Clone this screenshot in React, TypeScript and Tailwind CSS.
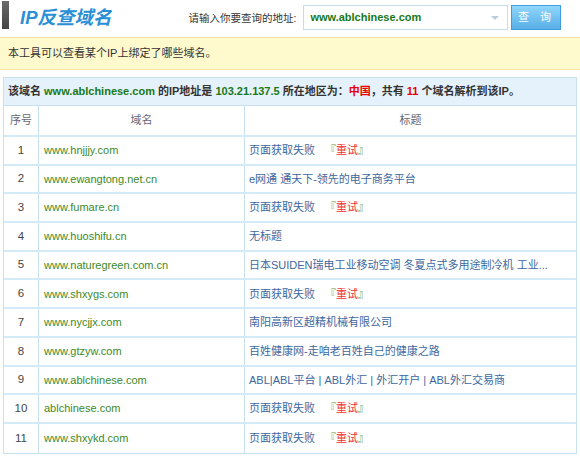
import * as React from "react";

const ROWS: { no: number; domain: string; title: string; retry?: boolean }[] = [
  { no: 1, domain: "www.hnjjjy.com", title: "页面获取失败", retry: true },
  { no: 2, domain: "www.ewangtong.net.cn", title: "e网通 通天下-领先的电子商务平台" },
  { no: 3, domain: "www.fumare.cn", title: "页面获取失败", retry: true },
  { no: 4, domain: "www.huoshifu.cn", title: "无标题" },
  { no: 5, domain: "www.naturegreen.com.cn", title: "日本SUIDEN瑞电工业移动空调 冬夏点式多用途制冷机 工业..." },
  { no: 6, domain: "www.shxygs.com", title: "页面获取失败", retry: true },
  { no: 7, domain: "www.nycjjx.com", title: "南阳高新区超精机械有限公司" },
  { no: 8, domain: "www.gtzyw.com", title: "百姓健康网-走咱老百姓自己的健康之路" },
  { no: 9, domain: "www.ablchinese.com", title: "ABL|ABL平台 | ABL外汇 | 外汇开户 | ABL外汇交易商" },
  { no: 10, domain: "ablchinese.com", title: "页面获取失败", retry: true },
  { no: 11, domain: "www.shxykd.com", title: "页面获取失败", retry: true },
];

const FONT = "font-['Liberation_Sans','Noto_Sans_CJK_SC',sans-serif]";
const COLS = "grid grid-cols-[35px_206px_1fr]";

export default function App() {
  return (
    <div className={`h-[457px] w-[580px] overflow-hidden bg-white text-[#333] ${FONT}`}>
      {/* Header */}
      <div className="flex h-[36px] items-start">
        <div className="ml-[2px] mt-[1px] h-[28px] w-[7px] bg-gradient-to-b from-[#6a6a6a] to-[#444]" />
        <h1 className="ml-[11px] mt-[6px] text-[18.5px] font-bold italic leading-[24px] text-[#2b8fd6]">
          IP反查域名
        </h1>
        <span className="ml-[77px] mt-[11px] text-[10.5px] leading-[14px] text-[#333]">
          请输入你要查询的地址:
        </span>
        <div className="relative ml-[7px] mt-[5px] flex h-[25px] w-[205px] items-center border border-[#c9dbe8] bg-white pl-[6px]">
          <span className="text-[11px] font-bold text-[#187818]">www.ablchinese.com</span>
          <span className="absolute right-[8px] top-[10px] h-0 w-0 border-x-[4px] border-t-[4px] border-x-transparent border-t-[#b9cfe0]" />
        </div>
        <button
          type="button"
          className="ml-[3px] mt-[5px] h-[25px] w-[50px] border border-[#3f9fdc] bg-gradient-to-b from-[#8fd6fb] to-[#56afe6] text-[11px] tracking-[4px] text-white"
        >
          查 询
        </button>
      </div>

      {/* Notice */}
      <div className="mt-[1px] flex h-[33px] items-center border-y border-[#fbe59c] bg-[#fffacd] pl-[8px] text-[11px]">
        本工具可以查看某个IP上绑定了哪些域名。
      </div>

      {/* Result */}
      <div className="mx-[3px] mt-[7px] border border-[#c6e0f0]">
        <div className="flex h-[28px] items-center border-b border-[#c6e0f0] bg-[#e6f2fb] pl-[4px] text-[11px] font-bold">
          该域名&nbsp;<span className="text-[#187818]">www.ablchinese.com</span>&nbsp;的IP地址是&nbsp;
          <span className="text-[#187818]">103.21.137.5</span>&nbsp;所在地区为：
          <span className="text-[#e60000]">中国</span>，共有&nbsp;
          <span className="text-[#e60000]">11</span>&nbsp;个域名解析到该IP。
        </div>

        <div className={`${COLS} h-[31px] border-b-2 border-[#d4eaf6] text-[11px] text-[#667]`}>
          <div className="flex items-center justify-center border-r border-[#c6e0f0]">序号</div>
          <div className="flex items-center justify-center border-r border-[#c6e0f0]">域名</div>
          <div className="flex items-center justify-center">标题</div>
        </div>

        {ROWS.map((r, i) => (
          <div
            key={r.no}
            className={`${COLS} h-[28.7px] ${i < ROWS.length - 1 ? "border-b-2 border-[#d4eaf6]" : ""}`}
          >
            <div className="flex items-center justify-center border-r border-[#c6e0f0] text-[11.5px] text-[#444]">
              {r.no}
            </div>
            <div className="flex items-center border-r border-[#c6e0f0] pl-[5px] text-[11px] text-[#3c8a28]">
              {r.domain}
            </div>
            <div className="flex items-center whitespace-nowrap pl-[4px] text-[11px] text-[#3d67a0]">
              {r.title}
              {r.retry && (
                <span className="ml-[10px]">
                  <span className="text-[#7fa23a]">『</span>
                  <span className="text-[#f03030]">重试</span>
                  <span className="text-[#4c9a5a]">』</span>
                </span>
              )}
            </div>
          </div>
        ))}
      </div>
    </div>
  );
}
